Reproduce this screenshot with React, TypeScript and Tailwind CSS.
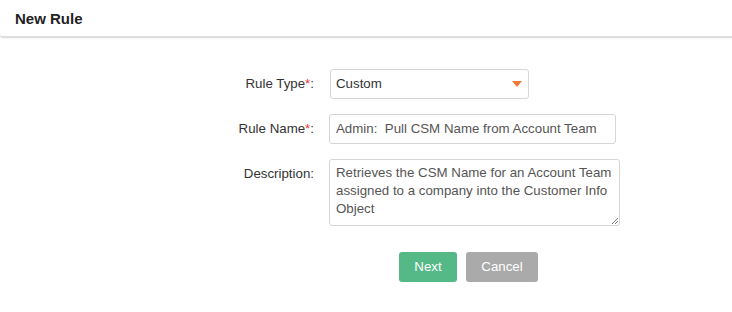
import React from "react";

export default function App() {
  const font = { fontFamily: '"Liberation Sans", Arial, sans-serif' };
  return (
    <div className="w-[732px] h-[312px] bg-white relative overflow-hidden" style={font}>
      <div className="h-[38px] border-b-2 border-[#dedede] rounded-bl-[3px] flex items-center pl-[15px] shadow-[0_1px_1px_rgba(0,0,0,0.04)]">
        <span className="text-[15px] font-bold text-[#222] leading-none">New Rule</span>
      </div>
      <div className="flex flex-col pt-[31px]">
        <div className="flex items-center h-[30px]">
          <div className="w-[314px] text-right text-[13.3px] text-[#333]">
            Rule Type<span className="text-[#e33]">*</span>:
          </div>
          <div className="ml-[16px] w-[199px] h-[30px] border border-[#d6d6d6] rounded-[3px] flex items-center justify-between pl-[5px] pr-[6px]">
            <span className="text-[13.3px] text-[#333]">Custom</span>
            <svg width="10" height="6" viewBox="0 0 10 6">
              <polygon points="0,0 10,0 5,6" fill="#f07a3a" />
            </svg>
          </div>
        </div>
        <div className="flex items-center h-[30px] mt-[15px]">
          <div className="w-[314px] text-right text-[13.3px] text-[#333]">
            Rule Name<span className="text-[#e33]">*</span>:
          </div>
          <div className="ml-[15px] w-[287px] h-[30px] border border-[#d6d6d6] rounded-[3px] flex items-center pl-[6px]">
            <span className="text-[13.3px] text-[#555] whitespace-pre">Admin:  Pull CSM Name from Account Team</span>
          </div>
        </div>
        <div className="flex items-start mt-[15px]">
          <div className="w-[314px] text-right text-[13.3px] text-[#333] pt-[5px]">Description:</div>
          <div className="ml-[15px] w-[291px] h-[67px] border border-[#d6d6d6] rounded-[3px] relative pl-[6px] pt-[4px] pr-[4px]">
            <div className="text-[13.3px] leading-[18px] text-[#555]">
              Retrieves the CSM Name for an Account Team assigned to a company into the Customer Info Object
            </div>
            <svg width="7" height="7" viewBox="0 0 7 7" className="absolute right-[1px] bottom-[1px]">
              <line x1="1" y1="7" x2="7" y2="1" stroke="#777" strokeWidth="1" />
              <line x1="4" y1="7" x2="7" y2="4" stroke="#777" strokeWidth="1" />
            </svg>
          </div>
        </div>
        <div className="flex mt-[26px] ml-[399px] gap-[9px]">
          <button className="w-[58px] h-[30px] rounded-[3px] bg-[#55b987] text-white text-[13.3px]">Next</button>
          <button className="w-[72px] h-[30px] rounded-[3px] bg-[#aaaaaa] text-white text-[13.3px]">Cancel</button>
        </div>
      </div>
    </div>
  );
}
